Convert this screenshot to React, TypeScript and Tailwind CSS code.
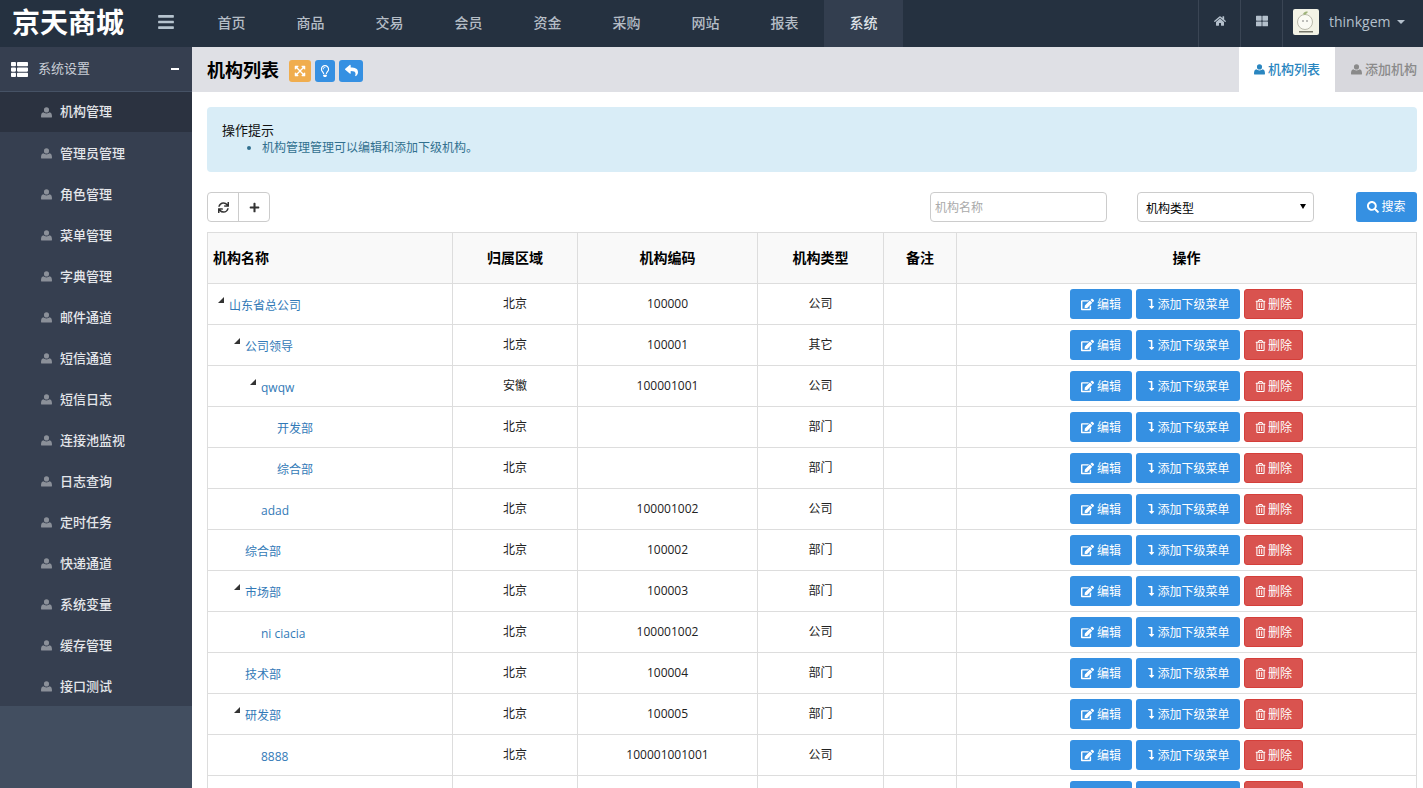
import { FaBars, FaEdit, FaExpandArrowsAlt, FaHome, FaLevelDownAlt, FaPlus, FaRegLightbulb, FaRegTrashAlt, FaReply, FaSearch, FaSync, FaThLarge, FaThList } from 'react-icons/fa'

const font = { fontFamily: '"Open Sans", "Noto Sans CJK SC", sans-serif' }

const navItems = ['首页', '商品', '交易', '会员', '资金', '采购', '网站', '报表', '系统']
const menuItems = ['机构管理', '管理员管理', '角色管理', '菜单管理', '字典管理', '邮件通道', '短信通道', '短信日志', '连接池监视', '日志查询', '定时任务', '快递通道', '系统变量', '缓存管理', '接口测试']

const rows = [
  { name: '山东省总公司', level: 0, open: true, area: '北京', code: '100000', type: '公司' },
  { name: '公司领导', level: 1, open: true, area: '北京', code: '100001', type: '其它' },
  { name: 'qwqw', level: 2, open: true, area: '安徽', code: '100001001', type: '公司' },
  { name: '开发部', level: 3, open: false, area: '北京', code: '', type: '部门' },
  { name: '综合部', level: 3, open: false, area: '北京', code: '', type: '部门' },
  { name: 'adad', level: 2, open: false, area: '北京', code: '100001002', type: '公司' },
  { name: '综合部', level: 1, open: false, area: '北京', code: '100002', type: '部门' },
  { name: '市场部', level: 1, open: true, area: '北京', code: '100003', type: '部门' },
  { name: 'ni ciacia', level: 2, open: false, area: '北京', code: '100001002', type: '公司' },
  { name: '技术部', level: 1, open: false, area: '北京', code: '100004', type: '部门' },
  { name: '研发部', level: 1, open: true, area: '北京', code: '100005', type: '部门' },
  { name: '8888', level: 2, open: false, area: '北京', code: '100001001001', type: '公司' },
  { name: '', level: 2, open: false, area: '', code: '', type: '' },
]

function UserIcon({ className }: { className?: string }) {
  return (
    <svg viewBox="0 0 12 12" className={className} fill="currentColor">
      <circle cx="6" cy="3.2" r="2.8" />
      <path d="M1 11.5c-.6 0-1-.4-1-1 0-2.600.8-4.500 2.600-4.700C3.400 6.500 4.600 7 6 7s2.600-.5 3.400-1.200c1.800.2 2.600 2.100 2.600 4.700 0 .6-.4 1-1 1z" />
    </svg>
  )
}

function Avatar() {
  return (
    <svg viewBox="0 0 26 26" className="w-[26px] h-[26px] rounded-[2px]">
      <rect width="26" height="26" fill="#f3f3e6" />
      <circle cx="12" cy="13" r="7.500" fill="#fbfbf4" stroke="#a9aa9a" strokeWidth="0.8" />
      <path d="M10 5c1-2 3-3 5-2-1 1-2 2-3 3z" fill="#9fb47a" />
      <circle cx="10" cy="12" r="0.700" fill="#555" />
      <circle cx="14" cy="12" r="0.700" fill="#555" />
      <rect x="6" y="22" width="14" height="1.500" fill="#77776a" />
    </svg>
  )
}

function Sidebar() {
  return (
    <aside className="w-[192px] shrink-0 bg-[#424e60] flex flex-col">
      <div className="h-[45px] bg-[#363f50] border-b border-[#465265] flex items-center pl-[11px] pr-[13px] text-[13px] text-[#c9ced6]">
        <FaThList className="text-[17px] text-white" />
        <span className="ml-[10px] flex-1">系统设置</span>
        <span className="w-[8px] h-[2px] bg-white" />
      </div>
      <ul className="bg-[#363f50]">
        {menuItems.map((item, i) => (
          <li key={item} className={`flex items-center pl-[41px] text-[13px] font-medium text-[#e4e6ea] ${i === 0 ? 'h-[40px] bg-[#2b3240]' : 'h-[41px] pt-[2px]'}`}>
            <UserIcon className="w-[11px] h-[11px] text-[#8b9099]" />
            <span className="ml-[8px]">{item}</span>
          </li>
        ))}
      </ul>
    </aside>
  )
}

function OrgTable() {
  return (
    <table className="w-[1210px] table-fixed border-collapse text-[12px] text-[#222]">
      <colgroup>
        <col className="w-[245px]" />
        <col className="w-[125px]" />
        <col className="w-[180px]" />
        <col className="w-[126px]" />
        <col className="w-[73px]" />
        <col />
      </colgroup>
      <thead>
        <tr className="h-[51px] bg-[#f9f9f9] text-[14px] font-bold text-black">
          <th className="border border-[#ddd] text-left pl-[5px] pb-[2px]">机构名称</th>
          <th className="border border-[#ddd] pb-[2px]">归属区域</th>
          <th className="border border-[#ddd] pb-[2px]">机构编码</th>
          <th className="border border-[#ddd] pb-[2px]">机构类型</th>
          <th className="border border-[#ddd] pb-[2px]">备注</th>
          <th className="border border-[#ddd] pb-[2px]">操作</th>
        </tr>
      </thead>
      <tbody>
        {rows.map((row, i) => (
          <tr key={i} className="h-[41px]">
            <td className="border border-[#ddd] p-0">
              <div className="relative pt-[4px] text-[#337ab7]" style={{ paddingLeft: 21 + row.level * 16 }}>
                {row.open && (
                  <svg viewBox="0 0 6 6" className="absolute top-[4px] w-[6px] h-[6px] text-[#333]" style={{ left: 10 + row.level * 16 }} fill="currentColor">
                    <path d="M6 0v6H0z" />
                  </svg>
                )}
                {row.name}
              </div>
            </td>
            <td className="border border-[#ddd] text-center">{row.area}</td>
            <td className="border border-[#ddd] text-center">{row.code}</td>
            <td className="border border-[#ddd] text-center">{row.type}</td>
            <td className="border border-[#ddd]" />
            <td className="border border-[#ddd] p-0">
              <div className="flex justify-center gap-[4px] text-[12px] text-white">
                <button className="w-[62px] h-[30px] pt-[2px] rounded-[3px] bg-[#3590e2] flex items-center justify-center gap-[3px]">
                  <FaEdit className="text-[13px] -mt-[2px]" />编辑
                </button>
                <button className="w-[104px] h-[30px] pt-[2px] rounded-[3px] bg-[#3590e2] flex items-center justify-center gap-[1px]">
                  <FaLevelDownAlt className="text-[10px] -mt-[2px]" />添加下级菜单
                </button>
                <button className="w-[59px] h-[30px] pt-[2px] rounded-[3px] bg-[#d9534f] border border-[#d43f3a] flex items-center justify-center gap-[2px]">
                  <FaRegTrashAlt className="text-[11px] -mt-[2px]" />删除
                </button>
              </div>
            </td>
          </tr>
        ))}
      </tbody>
    </table>
  )
}

export default function App() {
  return (
    <div className="h-screen flex flex-col overflow-hidden bg-white" style={font}>
      <header className="h-[47px] shrink-0 bg-[#253140] flex">
        <div className="w-[192px] flex items-center pl-[12px] pr-[17px] pb-[3px] justify-between">
          <span className="text-[28px] font-bold text-white leading-none">京天商城</span>
          <FaBars className="text-[18px] text-[#b6c3ce]" />
        </div>
        <nav className="flex flex-1">
          {navItems.map((item) => (
            <a key={item} className={`w-[79px] pb-[3px] flex items-center justify-center text-[14px] font-medium ${item === '系统' ? 'bg-[#333e4f] text-[#dfe3e8]' : 'text-[#b5bdc6]'}`}>
              {item}
            </a>
          ))}
        </nav>
        <div className="flex text-[#b4c0cc]">
          <div className="w-[42px] pb-[5px] border-l border-[#3a4554] flex items-center justify-center">
            <FaHome className="text-[12px]" />
          </div>
          <div className="w-[42px] pb-[5px] border-l border-[#3a4554] flex items-center justify-center">
            <FaThLarge className="text-[12px]" />
          </div>
          <div className="w-[141px] pb-[3px] border-l border-[#3a4554] flex items-center pl-[10px]">
            <Avatar />
            <span className="ml-[10px] text-[14px] leading-none">thinkgem</span>
            <span className="ml-[7px] border-x-[4px] border-t-[4px] border-x-transparent border-t-[#b4c0cc]" />
          </div>
        </div>
      </header>

      <div className="flex flex-1 min-h-0">
        <Sidebar />
        <main className="flex-1 min-w-0 overflow-hidden">
          <div className="h-[45px] bg-[#dfe0e5] flex items-center pl-[15px]">
            <h1 className="text-[18px] font-bold text-black leading-none">机构列表</h1>
            <div className="ml-[10px] mt-[2px] flex gap-[4px] text-white">
              <span className="w-[22px] h-[22px] rounded-[3px] bg-[#f0ad4e] flex items-center justify-center"><FaExpandArrowsAlt className="text-[12px]" /></span>
              <span className="w-[20px] h-[22px] rounded-[3px] bg-[#3590e2] flex items-center justify-center"><FaRegLightbulb className="text-[12px]" /></span>
              <span className="w-[24px] h-[22px] rounded-[3px] bg-[#3590e2] flex items-center justify-center"><FaReply className="text-[13px]" /></span>
            </div>
            <div className="ml-auto flex self-stretch text-[13px] font-medium whitespace-nowrap">
              <div className="w-[96px] bg-white text-[#2a86c0] flex items-center justify-center gap-[3px]">
                <UserIcon className="w-[11px] h-[11px]" />机构列表
              </div>
              <div className="w-[88px] bg-[#d8d8dd] text-[#8a8a8a] flex items-center pl-[16px] gap-[3px] overflow-hidden">
                <UserIcon className="w-[11px] h-[11px] shrink-0" />添加机构
              </div>
            </div>
          </div>

          <div className="pl-[15px] pr-[6px] pt-[15px]">
            <div className="h-[65px] rounded-[4px] bg-[#d9edf7] pl-[15px] pt-[14px]">
              <p className="text-[13px] leading-[18px] text-[#111]">操作提示</p>
              <ul className="mt-[1px] list-disc pl-[40px] text-[12px] leading-[16px] text-[#31708f]">
                <li>机构管理管理可以编辑和添加下级机构。</li>
              </ul>
            </div>

            <div className="mt-[20px] mb-[10px] flex h-[30px] text-[12px]">
              <div className="flex w-[63px] border border-[#ccc] rounded-[4px] text-[#333]">
                <button className="flex-1 border-r border-[#ccc] flex items-center justify-center"><FaSync className="text-[11px]" /></button>
                <button className="flex-1 flex items-center justify-center"><FaPlus className="text-[11px]" /></button>
              </div>
              <input placeholder="机构名称" className="ml-auto w-[177px] border border-[#ccc] rounded-[4px] px-[4px] pt-[1px] placeholder:text-[#aaa] outline-none" />
              <div className="relative ml-[30px] w-[177px]">
                <select className="appearance-none w-full h-full border border-[#ccc] rounded-[4px] bg-white pl-[8px] pt-[4px] text-black">
                  <option>机构类型</option>
                </select>
                <span className="absolute right-[8px] top-[12px] border-x-[3.5px] border-t-[5px] border-x-transparent border-t-black" />
              </div>
              <button className="ml-[42px] w-[61px] rounded-[3px] bg-[#3590e2] text-white flex items-center justify-center gap-[2px]">
                <FaSearch className="text-[12px]" />搜索
              </button>
            </div>

            <OrgTable />
          </div>
        </main>
      </div>
    </div>
  )
}
